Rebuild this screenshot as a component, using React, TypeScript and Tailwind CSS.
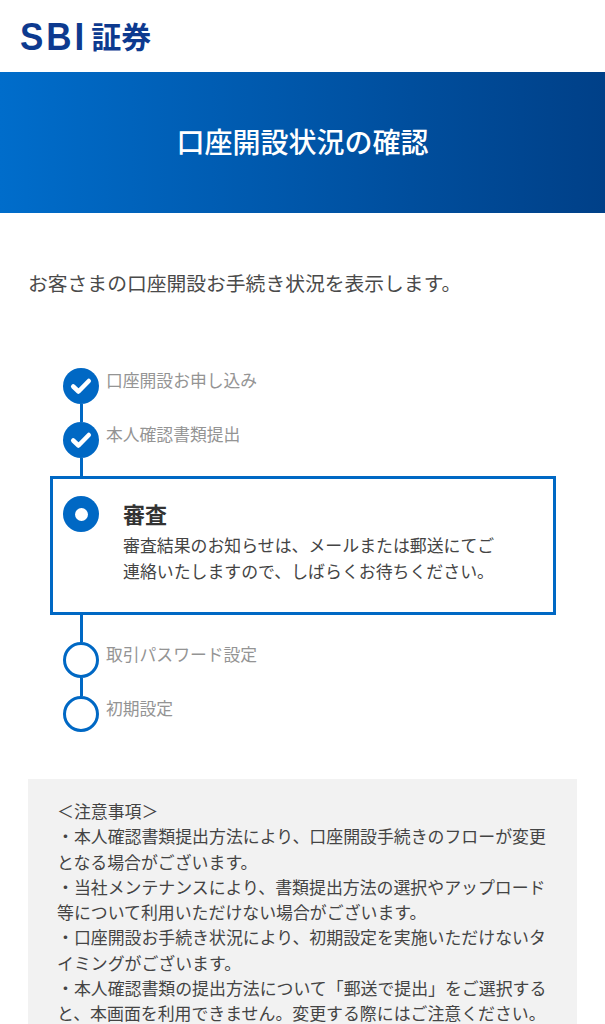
const font = { fontFamily: '"Noto Sans CJK JP", "Noto Sans", sans-serif' };

function CheckCircle() {
  return (
    <div className="flex h-9 w-9 shrink-0 items-center justify-center rounded-full bg-[#0068c4]">
      <svg width="22" height="22" viewBox="0 0 22 22" fill="none">
        <path d="M3.2 11.5 L8.5 16.5 L18.8 6" stroke="#fff" strokeWidth="4.5" strokeLinecap="round" strokeLinejoin="round" />
      </svg>
    </div>
  );
}

function EmptyCircle() {
  return <div className="h-9 w-9 shrink-0 rounded-full border-[3.5px] border-[#0068c4] bg-white" />;
}

function Connector({ height }: { height: string }) {
  return <div className={`w-[3px] bg-[#0068c4] ${height}`} />;
}

function Step({ label, done, line }: { label: string; done?: boolean; line?: boolean }) {
  return (
    <div className="flex gap-[7px]">
      <div className="flex w-9 flex-col items-center">
        {done ? <CheckCircle /> : <EmptyCircle />}
        {line && <Connector height="h-[18px]" />}
      </div>
      <div className="mt-[-2px] text-[16.8px] leading-[28px] text-[#949494]">{label}</div>
    </div>
  );
}

export default function App() {
  return (
    <div className="h-[1024px] w-[605px] overflow-hidden bg-white" style={font}>
      {/* Header */}
      <div className="flex h-[72px] items-center pb-[2px] pl-[20px]">
        <span
          className="origin-center scale-y-[1.12] text-[35px] font-bold leading-none tracking-[3px] text-[#0d3a8f]"
          style={{ fontFamily: '"Liberation Sans", sans-serif' }}
        >
          SBI
        </span>
        <span className="ml-[4px] text-[30px] font-bold leading-none text-[#0d3a8f]">証券</span>
      </div>

      {/* Title */}
      <div className="flex h-[141px] items-center justify-center bg-gradient-to-r from-[#006dcb] to-[#004088]">
        <h1 className="mt-[-3px] text-[28px] font-medium text-white">口座開設状況の確認</h1>
      </div>

      <div className="px-[28px]">
        <p className="mt-[55px] text-[19.8px] leading-[30px] text-[#4a4a4a]">お客さまの口座開設お手続き状況を表示します。</p>

        {/* Steps */}
        <div className="mt-[70px]">
          <div className="ml-[35px]">
            <Step label="口座開設お申し込み" done line />
            <Step label="本人確認書類提出" done line />
          </div>
          <div className="ml-[22px] mr-[21px] flex h-[139px] gap-[24px] border-[3px] border-[#0068c4] pl-[10px] pt-[17px]">
            <div className="flex h-9 w-9 shrink-0 items-center justify-center rounded-full bg-[#0068c4]">
              <div className="h-[13px] w-[13px] rounded-full bg-white" />
            </div>
            <div>
              <div className="mt-[1px] text-[22px] font-bold leading-[32px] text-[#333]">審査</div>
              <p className="mt-[3px] text-[16.9px] leading-[26px] text-[#444]">
                審査結果のお知らせは、メールまたは郵送にてご
                <br />
                連絡いたしますので、しばらくお待ちください。
              </p>
            </div>
          </div>
          <div className="ml-[35px]">
            <div className="flex w-9 justify-center">
              <Connector height="h-[27px]" />
            </div>
            <Step label="取引パスワード設定" line />
            <Step label="初期設定" />
          </div>
        </div>

        {/* Notes */}
        <div className="mt-[47px] bg-[#f2f2f2] pl-[29px] pt-[19px] text-[16.9px] leading-[25.25px] text-[#444]">
          ＜注意事項＞
          <br />
          ・本人確認書類提出方法により、口座開設手続きのフローが変更
          <br />
          となる場合がございます。
          <br />
          ・当社メンテナンスにより、書類提出方法の選択やアップロード
          <br />
          等について利用いただけない場合がございます。
          <br />
          ・口座開設お手続き状況により、初期設定を実施いただけないタ
          <br />
          イミングがございます。
          <br />
          ・本人確認書類の提出方法について「郵送で提出」をご選択する
          <br />
          と、本画面を利用できません。変更する際にはご注意ください。
          <br />
          <br />
        </div>
      </div>
    </div>
  );
}
